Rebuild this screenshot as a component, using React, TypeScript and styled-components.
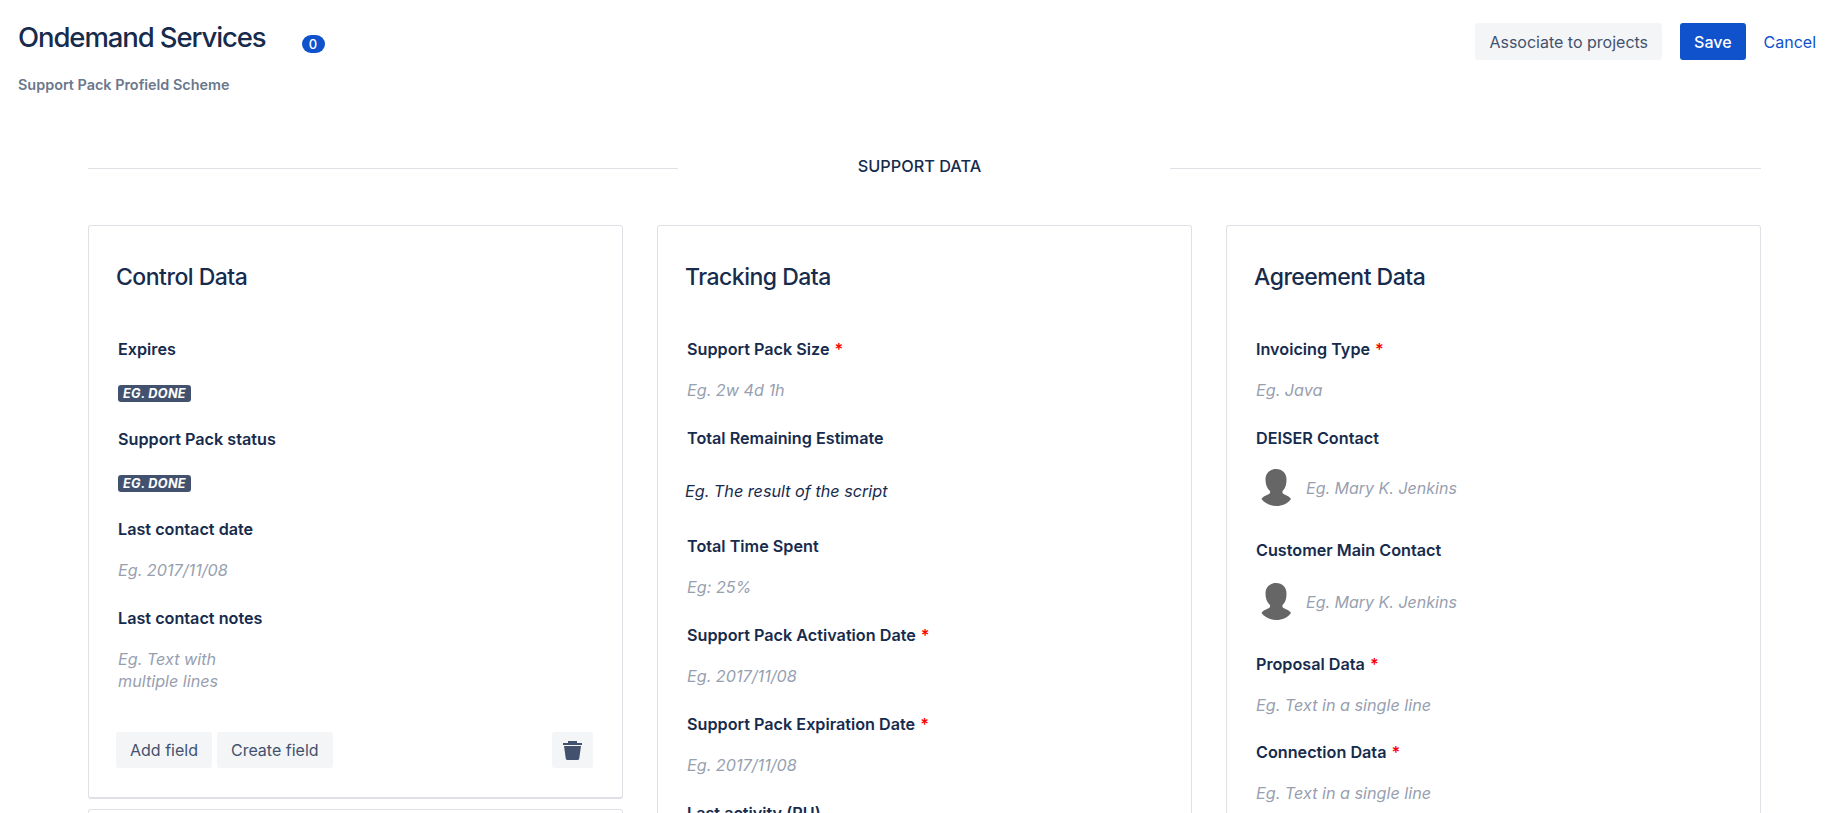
import styled, { createGlobalStyle } from 'styled-components';

const GlobalStyle = createGlobalStyle`
  html, body {
    margin: 0;
    height: 813px;
    overflow: hidden;
    background: #fff;
    font-family: Inter, "Liberation Sans", sans-serif;
    color: #172b4d;
  }
  * { box-sizing: border-box; }
`;

const Page = styled.div`
  width: 1839px;
  height: 813px;
  overflow: hidden;
`;

const Header = styled.header`
  display: flex;
  justify-content: space-between;
  align-items: flex-start;
  height: 158px;
  padding: 23px 23px 0 18px;
`;

const TitleRow = styled.div`
  display: flex;
  align-items: flex-start;
  gap: 36px;
`;

const Title = styled.h1`
  margin: 0;
  font-size: 27.5px;
  line-height: 28px;
  font-weight: 500;
  letter-spacing: -1.1px;
`;

const Counter = styled.span`
  margin-top: 12px;
  width: 23px;
  height: 18px;
  border-radius: 9px;
  background: #0f52cc;
  color: #fff;
  font-size: 13px;
  font-weight: 500;
  line-height: 18px;
  text-align: center;
`;

const Subtitle = styled.div`
  margin-top: 24px;
  font-size: 14.4px;
  line-height: 16px;
  font-weight: 600;
  color: #6b778c;
`;

const Actions = styled.div`
  display: flex;
  align-items: center;
  gap: 18px;
`;

const Button = styled.button<{ $primary?: boolean }>`
  height: 37px;
  padding: 0 14px;
  border: none;
  border-radius: 3px;
  font-family: inherit;
  font-size: 16px;
  background: ${(p) => (p.$primary ? '#0f52cc' : '#f4f5f7')};
  color: ${(p) => (p.$primary ? '#fff' : '#42526e')};
  font-weight: ${(p) => (p.$primary ? 500 : 400)};
`;

const CancelLink = styled.a`
  font-size: 16px;
  color: #0f52cc;
`;

const SectionDivider = styled.div`
  display: grid;
  grid-template-columns: 590px 1fr 591px;
  align-items: center;
  height: 20px;
  margin: 0 78px 0 88px;
`;

const Rule = styled.div`
  height: 1px;
  background: #dfe1e6;
`;

const SectionTitle = styled.div`
  margin-top: -4px;
  padding-right: 9px;
  text-align: center;
  font-size: 16.3px;
  font-weight: 500;
`;

const Columns = styled.div`
  display: grid;
  grid-template-columns: repeat(3, 1fr);
  gap: 34px;
  margin: 47px 78px 0 88px;
`;

const Column = styled.div`
  display: flex;
  flex-direction: column;
  gap: 10px;
`;

const Card = styled.section<{ $height: number }>`
  height: ${(p) => p.$height}px;
  flex: none;
  padding: 0 29px;
  border: 1px solid #dfe1e6;
  border-bottom-width: 2px;
  border-radius: 3px;
  overflow: hidden;
`;

const CardTitle = styled.h2`
  margin: 38px 0 49px -2px;
  font-size: 23px;
  line-height: 26px;
  font-weight: 500;
  letter-spacing: -0.5px;
`;

const Field = styled.div<{ $height: number }>`
  height: ${(p) => p.$height}px;
`;

const Label = styled.div`
  font-size: 16.2px;
  line-height: 20px;
  font-weight: 600;
`;

const Required = styled.span`
  margin-left: 5px;
  color: #ff0000;
`;

const Placeholder = styled.div<{ $dark?: boolean; $top?: number; $left?: number }>`
  margin-top: ${(p) => p.$top ?? 20}px;
  margin-left: ${(p) => p.$left ?? 0}px;
  font-size: 16.2px;
  line-height: 22px;
  font-style: italic;
  color: ${(p) => (p.$dark ? '#172b4d' : '#97a0af')};
`;

const Lozenge = styled.span`
  display: inline-block;
  margin-top: 26px;
  padding: 0 5px;
  height: 17px;
  border-radius: 3px;
  background: #42526e;
  color: #fff;
  font-size: 12.7px;
  line-height: 17px;
  font-weight: 700;
  font-style: italic;
  letter-spacing: 0.3px;
`;

const UserRow = styled.div<{ $top: number }>`
  display: flex;
  align-items: center;
  gap: 15px;
  margin-top: ${(p) => p.$top}px;
  margin-left: 5px;
`;

const UserName = styled.span`
  font-size: 16px;
  font-style: italic;
  color: #97a0af;
`;

const CardActions = styled.div`
  display: flex;
  gap: 5px;
  margin: 0 0 0 -2px;
`;

const SmallButton = styled(Button)`
  height: 36px;
`;

const TrashButton = styled(SmallButton)`
  display: flex;
  align-items: center;
  justify-content: center;
  width: 41px;
  padding: 0;
  margin-left: auto;
`;

function Avatar() {
  return (
    <svg width="30" height="37" viewBox="0 0 30 37" fill="#666666">
      <path d="M15 0c6.500 0 10.500 4.500 10.500 10.500 0 5-1 8.500-3.500 11-1 1-.8 2.500.2 3.200 2 1.400 5.800 2 7.800 5.300-3 4.500-9 7-14.500 7S3.500 34.500.5 30c2-3.300 5.800-3.900 7.800-5.300 1-.7 1.200-2.200.2-3.200-2.500-2.500-4-6-4-11C4.500 4.500 8.500 0 15 0z" />
    </svg>
  );
}

function TrashIcon() {
  return (
    <svg width="19" height="19" viewBox="0 0 19 19" fill="#42526e">
      <path d="M5 0h9v2h5v2H0V2h5z" />
      <path d="M1 5h17l-1.800 12.800c-.1.700-.7 1.200-1.400 1.200H4.200c-.7 0-1.300-.5-1.400-1.200z" />
    </svg>
  );
}

type Item = { label: string; required?: boolean };

function SimpleField({ label, required, value, height = 89 }: Item & { value: string; height?: number }) {
  return (
    <Field $height={height}>
      <Label>
        {label}
        {required && <Required>*</Required>}
      </Label>
      <Placeholder>{value}</Placeholder>
    </Field>
  );
}

function StatusField({ label }: Item) {
  return (
    <Field $height={90}>
      <Label>{label}</Label>
      <Lozenge>EG. DONE</Lozenge>
    </Field>
  );
}

function UserField({ label, height, top }: Item & { height: number; top: number }) {
  return (
    <Field $height={height}>
      <Label>{label}</Label>
      <UserRow $top={top}>
        <Avatar />
        <UserName>Eg. Mary K. Jenkins</UserName>
      </UserRow>
    </Field>
  );
}

export default function App() {
  return (
    <Page>
      <GlobalStyle />
      <Header>
        <div>
          <TitleRow>
            <Title>Ondemand Services</Title>
            <Counter>0</Counter>
          </TitleRow>
          <Subtitle>Support Pack Profield Scheme</Subtitle>
        </div>
        <Actions>
          <Button>Associate to projects</Button>
          <Button $primary>Save</Button>
          <CancelLink>Cancel</CancelLink>
        </Actions>
      </Header>

      <SectionDivider>
        <Rule />
        <SectionTitle>SUPPORT DATA</SectionTitle>
        <Rule />
      </SectionDivider>

      <Columns>
        <Column>
          <Card $height={574}>
            <CardTitle>Control Data</CardTitle>
            <StatusField label="Expires" />
            <StatusField label="Support Pack status" />
            <SimpleField label="Last contact date" value="Eg. 2017/11/08" />
            <Field $height={124}>
              <Label>Last contact notes</Label>
              <Placeholder>
                Eg. Text with
                <br />
                multiple lines
              </Placeholder>
            </Field>
            <CardActions>
              <SmallButton>Add field</SmallButton>
              <SmallButton>Create field</SmallButton>
              <TrashButton aria-label="Delete">
                <TrashIcon />
              </TrashButton>
            </CardActions>
          </Card>
          <Card $height={200} />
        </Column>

        <Column>
          <Card $height={700}>
            <CardTitle>Tracking Data</CardTitle>
            <SimpleField label="Support Pack Size" required value="Eg. 2w 4d 1h" />
            <Field $height={108}>
              <Label>Total Remaining Estimate</Label>
              <Placeholder $dark $top={32} $left={-2}>Eg. The result of the script</Placeholder>
            </Field>
            <SimpleField label="Total Time Spent" value="Eg: 25%" />
            <SimpleField label="Support Pack Activation Date" required value="Eg. 2017/11/08" />
            <SimpleField label="Support Pack Expiration Date" required value="Eg. 2017/11/08" />
            <SimpleField label="Last activity (RU)" value="Eg. 2017/11/08" />
          </Card>
        </Column>

        <Column>
          <Card $height={700}>
            <CardTitle>Agreement Data</CardTitle>
            <SimpleField label="Invoicing Type" required value="Eg. Java" />
            <UserField label="DEISER Contact" height={112} top={21} />
            <UserField label="Customer Main Contact" height={114} top={23} />
            <SimpleField label="Proposal Data" required value="Eg. Text in a single line" height={88} />
            <SimpleField label="Connection Data" required value="Eg. Text in a single line" />
          </Card>
        </Column>
      </Columns>
    </Page>
  );
}
